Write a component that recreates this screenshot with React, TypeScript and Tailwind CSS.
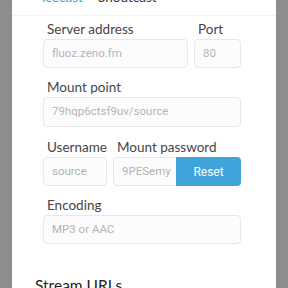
import React from "react";

const label = "text-[13.5px] leading-[13px] text-[#454545] pl-[4px] whitespace-nowrap";
const input =
  "h-[29px] rounded-[4px] border border-[#e8e8e8] bg-[#fcfcfc] flex items-center px-[8px] text-[11.5px] text-[#b4b4b4] whitespace-nowrap overflow-hidden min-w-0";
const lato = { fontFamily: "Lato, sans-serif" };
const roboto = { fontFamily: "Roboto, sans-serif" };

export default function App() {
  return (
    <div className="w-[288px] h-[288px] bg-[#8d8d8d] px-[12px] overflow-hidden" style={lato}>
      <div className="bg-white h-full flex flex-col">
        <div className="h-[16px] border-b border-[#f3f3f3] overflow-hidden shrink-0">
          <div className="grid grid-cols-[56px_auto] justify-start -mt-[10px] pl-[30px] text-[13.5px] leading-[14px]">
            <div className="text-[#3ea5dc] overflow-hidden whitespace-nowrap">Icecast</div>
            <div className="text-[#333] whitespace-nowrap">Shoutcast</div>
          </div>
        </div>
        <div className="pl-[31px] pr-[35px] flex flex-col">
          <div className="flex gap-[6px] mt-[7px]">
            <div className="flex flex-col gap-[3px] flex-1 min-w-0">
              <div className={label}>Server address</div>
              <div className={input} style={roboto}>fluoz.zeno.fm</div>
            </div>
            <div className="flex flex-col gap-[3px] w-[47px]">
              <div className={label}>Port</div>
              <div className={input} style={roboto}>80</div>
            </div>
          </div>
          <div className="flex flex-col gap-[3px] mt-[13px]">
            <div className={label}>Mount point</div>
            <div className={input + " h-[30px]"} style={roboto}>79hqp6ctsf9uv/source</div>
          </div>
          <div className="flex gap-[6px] mt-[14px]">
            <div className="flex flex-col gap-[3px] w-[64px]">
              <div className={label}>Username</div>
              <div className={input} style={roboto}>source</div>
            </div>
            <div className="flex flex-col gap-[3px] flex-1 min-w-0">
              <div className={label}>Mount password</div>
              <div className="flex h-[29px]">
                <div className="flex-1 min-w-0 rounded-l-[4px] border border-[#e8e8e8] border-r-0 bg-[#fcfcfc] flex items-center px-[8px] text-[11.5px] text-[#b4b4b4] overflow-hidden whitespace-nowrap" style={roboto}>9PESemy</div>
                <div className="w-[65px] shrink-0 rounded-r-[4px] bg-[#3ea5dc] text-white text-[12px] flex items-center justify-center" style={roboto}>Reset</div>
              </div>
            </div>
          </div>
          <div className="flex flex-col gap-[3px] mt-[13px]">
            <div className={label}>Encoding</div>
            <div className={input} style={roboto}>MP3 or AAC</div>
          </div>
        </div>
        <div className="pl-[23px] mt-[32px] text-[15.5px] leading-[18px] text-[#222] whitespace-nowrap">Stream URLs</div>
      </div>
    </div>
  );
}
